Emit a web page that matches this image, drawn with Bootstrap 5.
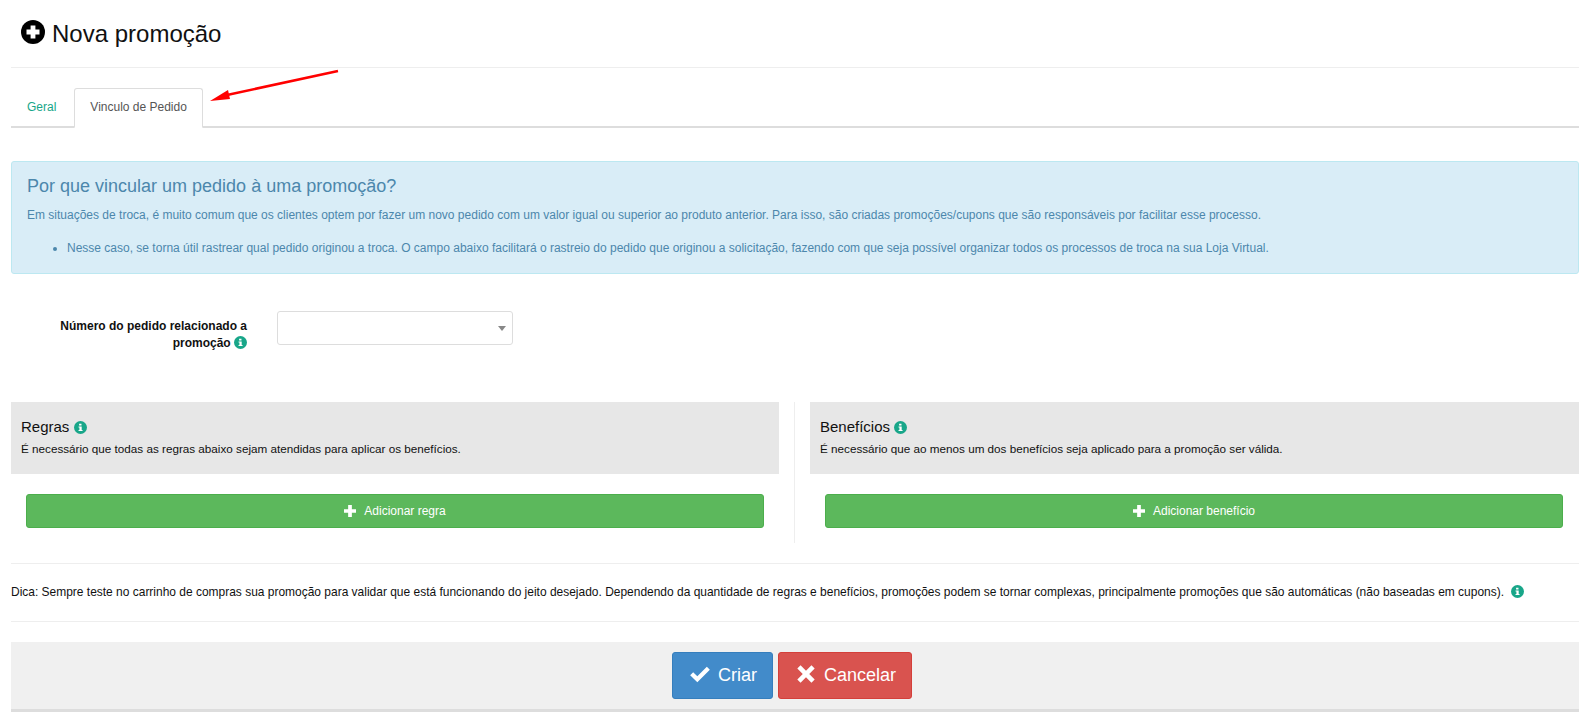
<!DOCTYPE html>
<html lang="pt-BR">
<head>
<meta charset="utf-8">
<title>Nova promoção</title>
<link href="https://cdn.jsdelivr.net/npm/bootstrap@5.3.0/dist/css/bootstrap.min.css" rel="stylesheet">
<style>
body{font-family:"Liberation Sans",Arial,sans-serif;font-size:12px;color:#111;background:#fff;padding:0 9px 0 11px;position:relative}
.page-head{height:68px;border-bottom:1px solid #eee;padding-left:10px;gap:7px}
.page-head h1{font-size:24px;font-weight:400;margin:0;color:#111;line-height:1}
.page-head svg{width:24px;height:24px;margin-top:-4px}
.tab-bar{margin-top:20px;border-bottom:2px solid #ddd;--bs-nav-tabs-border-width:1px;gap:2px}
.tab-bar .nav-link{font-size:12px;line-height:17px;padding:10px 15px;color:#18a689;height:39px;border-radius:3px 3px 0 0}
.tab-bar .nav-link.active{color:#555;border-color:#ddd #ddd #fff;background:#fff;margin-bottom:-2px;height:40px}
.why-box{margin:33px 0 37px;background:#d9edf7;border:1px solid #bce8f1;color:#4c87ac;border-radius:3px;padding:14px 15px;height:113px;font-size:12px}
.why-box h4{font-size:18px;font-weight:400;line-height:20px;margin:0 0 11px}
.why-box p{line-height:17px;margin:0 0 16px}
.why-box ul{margin:0;padding-left:40px;line-height:17px}
.order-label{width:236px;text-align:right;font-weight:700;line-height:17px;color:#111;margin-top:7px}
.order-pick{width:236px;margin-left:30px;position:relative}
.order-pick .form-select{height:34px;font-size:12px;background-image:none;border-color:#ddd;border-radius:3px;box-shadow:none}
.order-pick::after{content:"";position:absolute;right:7px;top:15px;border:4px solid transparent;border-top:5px solid #888;border-bottom:0}
.order-form{height:57px;margin-bottom:34px}
.info-dot{width:13px;height:13px;display:inline-block;vertical-align:-2px}
.rule-side{flex:0 0 768px;min-width:0}
.rule-side+.rule-rule+.rule-side{flex:1 1 0}
.rule-head{background:#e7e7e7;height:72px;padding:15px 10px;color:#111}
.rule-head h5{font-size:15px;font-weight:400;line-height:19px;margin:0 0 4px;color:#111}
.rule-head p{margin:0;line-height:17px;font-size:11.7px}
.rule-body{padding:20px 15px 15px}
.rule-rule+.rule-side .rule-body{padding-right:16px}
.add-btn{background:#5cb85c;border:1px solid #4cae4c;color:#fff;font-size:12px;height:34px;border-radius:3px;padding:0;display:flex;align-items:center;justify-content:center;gap:8px}
.add-btn:hover{background:#5cb85c;color:#fff}
.add-btn svg{width:12px;height:12px}
.rules-split{gap:15px}
.rule-rule{flex:0 0 1px;background:#eee}
.tip-line{margin-top:20px;border-top:1px solid #eee;border-bottom:1px solid #eee;height:59px;line-height:17px;color:#111;font-size:11.97px}
.action-bar{margin-top:20px;background:#f0f0f0;border-bottom:3px solid #ddd;height:70px;gap:5px;padding:10px 6px 0 0}
.act-btn{height:47px;font-size:18px;color:#fff;border-radius:3px;padding:0 0 2px 16px;display:flex;align-items:center;gap:7px;line-height:1}
.act-btn svg{width:22px;height:22px;margin-top:-2px}
.act-go{background:#428bca;border:1px solid #357ebd;width:101px}
.act-no{background:#d9534f;border:1px solid #d43f3a;width:134px}
.act-go:hover{background:#428bca;color:#fff}.act-no:hover{background:#d9534f;color:#fff}
.red-arrow{position:absolute;left:205px;top:65px;width:140px;height:42px;pointer-events:none}
</style>
</head>
<body>
<div class="page-head d-flex align-items-center">
  <svg viewBox="0 0 24 24" aria-hidden="true"><circle cx="12" cy="12" r="12" fill="#000"/><path d="M9.6 5.5h4.8v4.1h4.1v4.8h-4.1v4.1H9.6v-4.1H5.5V9.6h4.1z" fill="#fff"/></svg>
  <h1>Nova promoção</h1>
</div>

<nav class="nav nav-tabs tab-bar">
  <a class="nav-link" href="#">Geral</a>
  <a class="nav-link active" href="#">Vinculo de Pedido</a>
</nav>
<svg class="red-arrow" viewBox="0 0 140 42" aria-hidden="true"><path d="M133 6 L22 30" stroke="#f00" stroke-width="2.6" fill="none"/><path d="M5 36 L23 25 L25 34 Z" fill="#f00"/></svg>

<div class="why-box">
  <h4>Por que vincular um pedido à uma promoção?</h4>
  <p>Em situações de troca, é muito comum que os clientes optem por fazer um novo pedido com um valor igual ou superior ao produto anterior. Para isso, são criadas promoções/cupons que são responsáveis por facilitar esse processo.</p>
  <ul><li>Nesse caso, se torna útil rastrear qual pedido originou a troca. O campo abaixo facilitará o rastreio do pedido que originou a solicitação, fazendo com que seja possível organizar todos os processos de troca na sua Loja Virtual.</li></ul>
</div>

<div class="order-form d-flex align-items-start">
  <div class="order-label">Número do pedido relacionado a promoção <svg class="info-dot" viewBox="0 0 12 12"><use href="#i-info"/></svg></div>
  <div class="order-pick"><select class="form-select" aria-label="Número do pedido"><option></option></select></div>
</div>

<svg width="0" height="0" class="position-absolute"><defs><g id="i-info"><circle cx="6" cy="6" r="6" fill="#18a689"/><path d="M4.7 2.6h2.2v1.6H4.7zM4.2 5h2.9v3.2h.8v1H4.2v-1h.8V6H4.2z" fill="#fff"/></g></defs></svg>

<div class="d-flex rules-split">
  <div class="rule-side">
    <div class="rule-head">
      <h5>Regras <svg class="info-dot" viewBox="0 0 12 12"><use href="#i-info"/></svg></h5>
      <p>É necessário que todas as regras abaixo sejam atendidas para aplicar os benefícios.</p>
    </div>
    <div class="rule-body">
      <button class="btn add-btn w-100" type="button"><svg viewBox="0 0 11 11"><path d="M3.8 0h3.4v3.8H11v3.4H7.2V11H3.8V7.2H0V3.8h3.8z" fill="#fff"/></svg>Adicionar regra</button>
    </div>
  </div>
  <div class="rule-rule"></div>
  <div class="rule-side">
    <div class="rule-head">
      <h5>Benefícios <svg class="info-dot" viewBox="0 0 12 12"><use href="#i-info"/></svg></h5>
      <p>É necessário que ao menos um dos benefícios seja aplicado para a promoção ser válida.</p>
    </div>
    <div class="rule-body">
      <button class="btn add-btn w-100" type="button"><svg viewBox="0 0 11 11"><path d="M3.8 0h3.4v3.8H11v3.4H7.2V11H3.8V7.2H0V3.8h3.8z" fill="#fff"/></svg>Adicionar benefício</button>
    </div>
  </div>
</div>

<div class="tip-line d-flex align-items-center">
  <span>Dica: Sempre teste no carrinho de compras sua promoção para validar que está funcionando do jeito desejado. Dependendo da quantidade de regras e benefícios, promoções podem se tornar complexas, principalmente promoções que são automáticas (não baseadas em cupons). <svg class="info-dot ms-1" viewBox="0 0 12 12"><use href="#i-info"/></svg></span>
</div>

<div class="action-bar d-flex justify-content-center align-items-start">
  <button class="btn act-btn act-go" type="button"><svg viewBox="0 0 19 19"><path d="M1 10.5 3.6 7.9l3.6 3.6L15.4 3.2 18 5.8 7.2 16.6z" fill="#fff"/></svg>Criar</button>
  <button class="btn act-btn act-no" type="button"><svg viewBox="0 0 19 19"><path d="M4.8 2 9.5 6.7 14.2 2 17 4.8l-4.7 4.7 4.7 4.7-2.8 2.8-4.7-4.7L4.8 17 2 14.2l4.7-4.7L2 4.8z" fill="#fff"/></svg>Cancelar</button>
</div>
<script src="https://cdn.jsdelivr.net/npm/bootstrap@5.3.0/dist/js/bootstrap.bundle.min.js"></script>
</body>
</html>
